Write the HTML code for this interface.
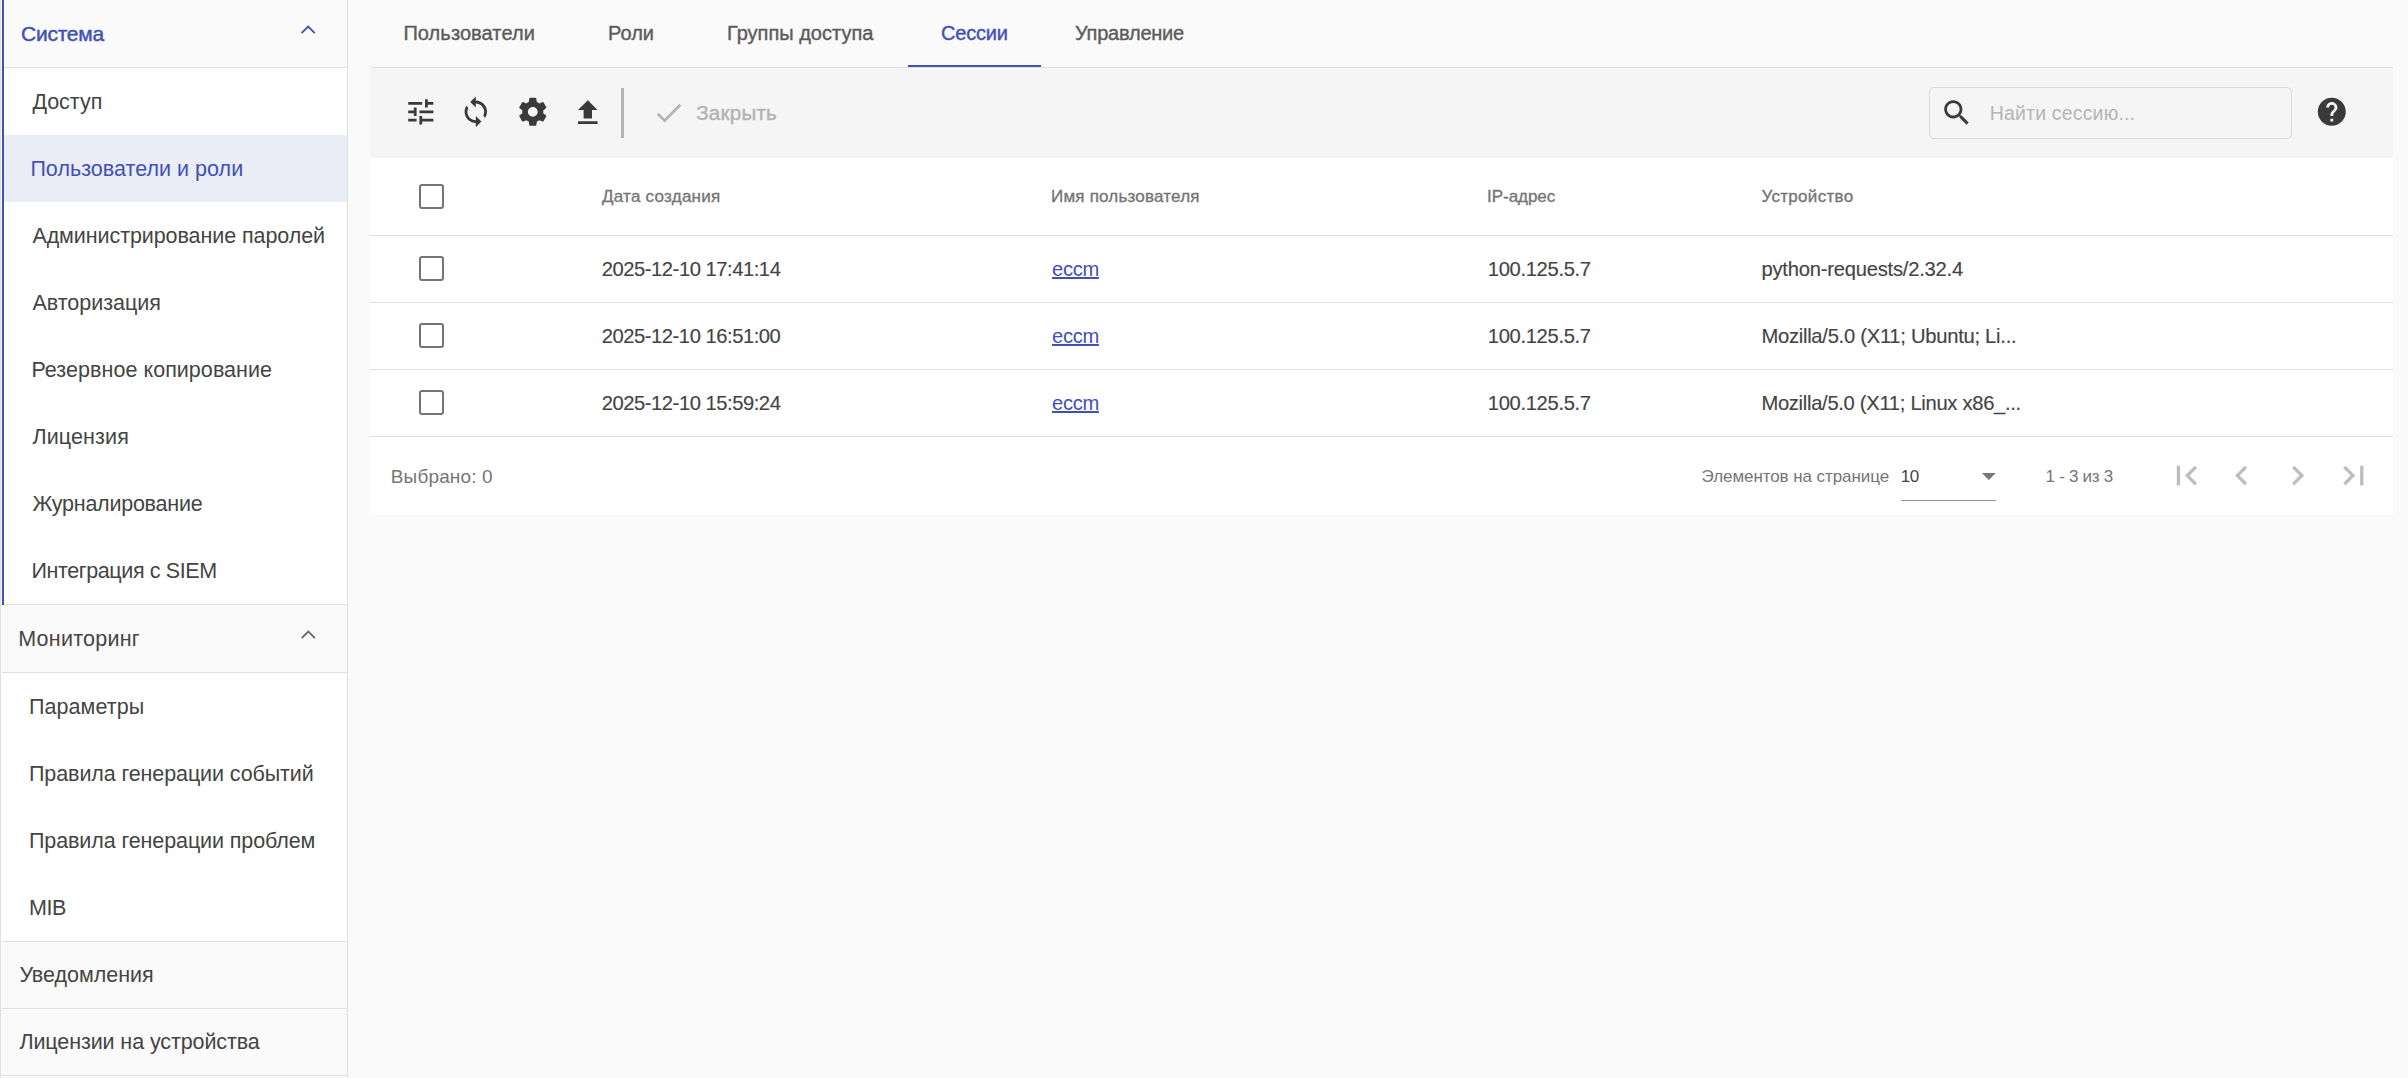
<!DOCTYPE html><html><head><meta charset="utf-8"><style>
html,body{margin:0;padding:0}
body{width:2408px;height:1078px;overflow:hidden;background:#fafafa;position:relative;font-family:"Liberation Sans",sans-serif}
.b{position:absolute}
.t{position:absolute;white-space:nowrap;line-height:0;font-family:"Liberation Sans",sans-serif}
.cb{position:absolute;width:21px;height:21px;border:2px solid #747474;border-radius:3px;box-sizing:content-box}
</style></head><body>

<div class="b" style="left:0px;top:0px;width:1px;height:1078px;background:#e0e0e0;"></div>
<div class="b" style="left:1px;top:0px;width:1px;height:1078px;background:#fcfcfc;"></div>
<div class="b" style="left:347px;top:0px;width:1px;height:1078px;background:#e0e0e0;"></div>
<div class="b" style="left:2px;top:0px;width:345px;height:67px;background:#fafafa;"></div>
<div class="b" style="left:2px;top:67px;width:345px;height:1px;background:#e0e0e0;"></div>
<div class="b" style="left:2px;top:68px;width:345px;height:536px;background:#ffffff;"></div>
<div class="b" style="left:2px;top:135px;width:345px;height:67px;background:#eaecf6;"></div>
<div class="b" style="left:2px;top:604px;width:345px;height:1px;background:#e0e0e0;"></div>
<div class="b" style="left:2px;top:0px;width:2px;height:605px;background:#3f51b5;"></div>
<div class="b" style="left:4px;top:0px;width:1px;height:67px;background:#ffffff;"></div>
<div class="b" style="left:2px;top:605px;width:345px;height:67px;background:#fafafa;"></div>
<div class="b" style="left:2px;top:672px;width:345px;height:1px;background:#e0e0e0;"></div>
<div class="b" style="left:2px;top:673px;width:345px;height:268px;background:#ffffff;"></div>
<div class="b" style="left:2px;top:941px;width:345px;height:1px;background:#e0e0e0;"></div>
<div class="b" style="left:2px;top:942px;width:345px;height:66px;background:#fafafa;"></div>
<div class="b" style="left:2px;top:1008px;width:345px;height:1px;background:#e0e0e0;"></div>
<div class="b" style="left:2px;top:1009px;width:345px;height:66px;background:#fafafa;"></div>
<div class="b" style="left:2px;top:1075px;width:345px;height:1px;background:#e0e0e0;"></div>
<svg class="b" style="left:296px;top:20px;width:24px;height:20px" viewBox="0 0 24 20"><polyline points="5.55,13.2 12.15,6.6 18.75,13.2" fill="none" stroke="#3f51b5" stroke-width="1.8"/></svg>
<svg class="b" style="left:296px;top:626px;width:24px;height:20px" viewBox="0 0 24 20"><polyline points="5.7,12.2 12.3,5.6 18.9,12.2" fill="none" stroke="#666" stroke-width="1.8"/></svg>
<div class="b" style="left:370px;top:67px;width:2023px;height:1px;background:#e0e0e0;"></div>
<div class="b" style="left:908px;top:65px;width:133px;height:2px;background:#3f51b5;"></div>
<div class="b" style="left:370px;top:68px;width:2023px;height:90px;background:#f5f5f5;"></div>
<div class="b" style="left:621px;top:88px;width:3px;height:50px;background:#b3b3b3;"></div>
<div class="b" style="left:1929px;top:87px;width:363px;height:52px;background:transparent;border:1px solid #d9d9d9;border-radius:5px;box-sizing:border-box;"></div>
<div class="b" style="left:370px;top:158px;width:2023px;height:357px;background:#ffffff;"></div>
<div class="b" style="left:370px;top:235px;width:2023px;height:1px;background:#e0e0e0;"></div>
<div class="b" style="left:370px;top:302px;width:2023px;height:1px;background:#e0e0e0;"></div>
<div class="b" style="left:370px;top:369px;width:2023px;height:1px;background:#e0e0e0;"></div>
<div class="b" style="left:370px;top:436px;width:2023px;height:1px;background:#e0e0e0;"></div>
<div class="cb" style="left:419px;top:184px"></div>
<div class="cb" style="left:419px;top:256px"></div>
<div class="cb" style="left:419px;top:323px"></div>
<div class="cb" style="left:419px;top:390px"></div>
<div class="b" style="left:1901px;top:500px;width:95px;height:1px;background:#959595;"></div>
<svg style="position:absolute;left:404.0px;top:95.2px;width:33.6px;height:33.6px" viewBox="0 0 24 24"><path fill="#3a3a3a" d="M3 17v2h6v-2H3zM3 5v2h10V5H3zm10 16v-2h8v-2h-8v-2h-2v6h2zM7 9v2H3v2h4v2h2V9H7zm14 4v-2H11v2h10zm-6-4h2V7h4V5h-4V3h-2v6z"/></svg>
<svg style="position:absolute;left:459.3px;top:95.3px;width:33.6px;height:33.6px" viewBox="0 0 24 24"><path fill="#3a3a3a" d="M12 4V1L8 5l4 4V6c3.31 0 6 2.69 6 6 0 1.01-.25 1.97-.7 2.8l1.46 1.46C19.54 15.03 20 13.57 20 12c0-4.42-3.58-8-8-8zm0 14c-3.31 0-6-2.69-6-6 0-1.01.25-1.97.7-2.8L5.24 7.74C4.46 8.97 4 10.43 4 12c0 4.42 3.58 8 8 8v3l4-4-4-4v3z"/></svg>
<svg style="position:absolute;left:516.0px;top:95.2px;width:33.6px;height:33.6px" viewBox="0 0 24 24"><path fill="#3a3a3a" d="M19.43 12.98c.04-.32.07-.64.07-.98s-.03-.66-.07-.98l2.11-1.65c.19-.15.24-.42.12-.64l-2-3.46c-.12-.22-.39-.3-.61-.22l-2.49 1c-.52-.4-1.08-.73-1.69-.98l-.38-2.65C14.46 2.18 14.25 2 14 2h-4c-.25 0-.46.18-.49.42l-.38 2.65c-.61.25-1.17.59-1.69.98l-2.49-1c-.23-.09-.49 0-.61.22l-2 3.46c-.13.22-.07.49.12.64l2.11 1.65c-.04.32-.07.65-.07.98s.03.66.07.98l-2.11 1.65c-.19.15-.24.42-.12.64l2 3.46c.12.22.39.3.61.22l2.49-1c.52.4 1.08.73 1.69.98l.38 2.65c.03.24.24.42.49.42h4c.25 0 .46-.18.49-.42l.38-2.65c.61-.25 1.17-.59 1.69-.98l2.49 1c.23.09.49 0 .61-.22l2-3.46c.12-.22.07-.49-.12-.64l-2.11-1.65zM12 15.5c-1.93 0-3.5-1.57-3.5-3.5s1.57-3.5 3.5-3.5 3.5 1.57 3.5 3.5-1.57 3.5-3.5 3.5z"/></svg>
<svg style="position:absolute;left:571.0px;top:96.0px;width:33.6px;height:33.6px" viewBox="0 0 24 24"><path fill="#3a3a3a" d="M9 16h6v-6h4l-7-7-7 7h4zm-4 2h14v2H5z"/></svg>
<svg style="position:absolute;left:652.2px;top:95.5px;width:33.6px;height:33.6px" viewBox="0 0 24 24"><path fill="#b3b3b3" d="M9 16.17L4.83 12l-1.42 1.41L9 19 21 7l-1.41-1.41z"/></svg>
<svg style="position:absolute;left:1939.9px;top:95.6px;width:33.6px;height:33.6px" viewBox="0 0 24 24"><path fill="#3a3a3a" d="M15.5 14h-.79l-.28-.27C15.41 12.59 16 11.11 16 9.5 16 5.91 13.09 3 9.5 3S3 5.91 3 9.5 5.91 16 9.5 16c1.61 0 3.09-.59 4.23-1.57l.27.28v.79l5 4.99L20.49 19l-4.99-5zm-6 0C7.01 14 5 11.99 5 9.5S7.01 5 9.5 5 14 7.01 14 9.5 11.99 14 9.5 14z"/></svg>
<svg style="position:absolute;left:2314.8px;top:95.2px;width:33.6px;height:33.6px" viewBox="0 0 24 24"><path fill="#3a3a3a" d="M12 2C6.48 2 2 6.48 2 12s4.48 10 10 10 10-4.48 10-10S17.52 2 12 2zm1 17h-2v-2h2v2zm2.07-7.75l-.9.92C13.45 12.9 13 13.5 13 15h-2v-.5c0-1.1.45-2.1 1.17-2.83l1.24-1.26c.37-.36.59-.86.59-1.41 0-1.1-.9-2-2-2s-2 .9-2 2H8c0-2.21 1.79-4 4-4s4 1.79 4 4c0 .88-.36 1.68-.93 2.25z"/></svg>
<svg style="position:absolute;left:2166.6px;top:456.1px;width:39.2px;height:39.2px" viewBox="0 0 24 24"><path fill="#bdbdbd" d="M18.41 16.59L13.82 12l4.59-4.59L17 6l-6 6 6 6zM6 6h2v12H6z"/></svg>
<svg style="position:absolute;left:2222.4px;top:456.1px;width:39.2px;height:39.2px" viewBox="0 0 24 24"><path fill="#bdbdbd" d="M15.41 7.41L14 6l-6 6 6 6 1.41-1.41L10.83 12z"/></svg>
<svg style="position:absolute;left:2278.4px;top:456.1px;width:39.2px;height:39.2px" viewBox="0 0 24 24"><path fill="#bdbdbd" d="M10 6L8.59 7.41 13.17 12l-4.58 4.59L10 18l6-6z"/></svg>
<svg style="position:absolute;left:2333.6px;top:456.1px;width:39.2px;height:39.2px" viewBox="0 0 24 24"><path fill="#bdbdbd" d="M5.59 7.41L10.18 12l-4.59 4.59L7 18l6-6-6-6zM16 6h2v12h-2z"/></svg>
<svg style="position:absolute;left:1972.2px;top:458.9px;width:33.6px;height:33.6px" viewBox="0 0 24 24"><path fill="#777777" d="M7 10l5 5 5-5z"/></svg>
<div class="t" id="s_sys" style="left:21.00px;top:34.00px;font-size:21px;color:#3f51b5;letter-spacing:-0.250px;-webkit-text-stroke:0.45px #3f51b5;">Система</div>
<div class="t" id="s_i0" style="left:32.40px;top:102.00px;font-size:21.5px;color:#444444;letter-spacing:-0.020px;">Доступ</div>
<div class="t" id="s_i1" style="left:30.40px;top:169.00px;font-size:21.5px;color:#3f51b5;letter-spacing:0.028px;">Пользователи и роли</div>
<div class="t" id="s_i2" style="left:32.40px;top:236.00px;font-size:21.5px;color:#444444;letter-spacing:-0.077px;">Администрирование паролей</div>
<div class="t" id="s_i3" style="left:32.40px;top:303.00px;font-size:21.5px;color:#444444;letter-spacing:-0.010px;">Авторизация</div>
<div class="t" id="s_i4" style="left:31.40px;top:370.00px;font-size:21.5px;color:#444444;letter-spacing:0.045px;">Резервное копирование</div>
<div class="t" id="s_i5" style="left:32.40px;top:437.00px;font-size:21.5px;color:#444444;letter-spacing:0.128px;">Лицензия</div>
<div class="t" id="s_i6" style="left:32.40px;top:504.00px;font-size:21.5px;color:#444444;letter-spacing:-0.238px;">Журналирование</div>
<div class="t" id="s_i7" style="left:31.40px;top:571.00px;font-size:21.5px;color:#444444;letter-spacing:-0.382px;">Интеграция с SIEM</div>
<div class="t" id="s_mon" style="left:18.20px;top:639.00px;font-size:21.5px;color:#444444;letter-spacing:0.246px;">Мониторинг</div>
<div class="t" id="s_m0" style="left:29.00px;top:707.00px;font-size:21.5px;color:#444444;letter-spacing:0.066px;">Параметры</div>
<div class="t" id="s_m1" style="left:29.00px;top:774.00px;font-size:21.5px;color:#444444;letter-spacing:-0.103px;">Правила генерации событий</div>
<div class="t" id="s_m2" style="left:29.00px;top:841.00px;font-size:21.5px;color:#444444;letter-spacing:-0.104px;">Правила генерации проблем</div>
<div class="t" id="s_m3" style="left:29.00px;top:908.00px;font-size:21.5px;color:#444444;letter-spacing:-0.400px;">MIB</div>
<div class="t" id="s_not" style="left:19.40px;top:975.00px;font-size:21.5px;color:#444444;letter-spacing:-0.010px;">Уведомления</div>
<div class="t" id="s_lic" style="left:19.40px;top:1042.00px;font-size:21.5px;color:#444444;letter-spacing:-0.099px;">Лицензии на устройства</div>
<div class="t" id="t0" style="left:403.40px;top:33.01px;font-size:20px;color:#5c5c5c;letter-spacing:0.084px;-webkit-text-stroke:0.4px #5c5c5c;">Пользователи</div>
<div class="t" id="t1" style="left:608.00px;top:33.01px;font-size:20px;color:#5c5c5c;letter-spacing:0.000px;-webkit-text-stroke:0.4px #5c5c5c;">Роли</div>
<div class="t" id="t2" style="left:727.00px;top:33.01px;font-size:20px;color:#5c5c5c;letter-spacing:0.000px;-webkit-text-stroke:0.4px #5c5c5c;">Группы доступа</div>
<div class="t" id="t3" style="left:941.00px;top:33.01px;font-size:20px;color:#3f51b5;letter-spacing:-0.200px;-webkit-text-stroke:0.4px #3f51b5;">Сессии</div>
<div class="t" id="t4" style="left:1075.00px;top:33.01px;font-size:20px;color:#5c5c5c;letter-spacing:-0.222px;-webkit-text-stroke:0.4px #5c5c5c;">Управление</div>
<div class="t" id="close" style="left:696.20px;top:113.01px;font-size:20.5px;color:#b3b3b3;letter-spacing:0.268px;-webkit-text-stroke:0.4px #b3b3b3;">Закрыть</div>
<div class="t" id="ph" style="left:1989.80px;top:113.01px;font-size:19.5px;color:#b5b5b5;letter-spacing:0.164px;">Найти сессию...</div>
<div class="t" id="h0" style="left:602.00px;top:197.00px;font-size:17px;color:#757575;letter-spacing:0.250px;-webkit-text-stroke:0.35px #757575;">Дата создания</div>
<div class="t" id="h1" style="left:1051.00px;top:197.00px;font-size:17px;color:#757575;letter-spacing:0.200px;-webkit-text-stroke:0.35px #757575;">Имя пользователя</div>
<div class="t" id="h2" style="left:1487.00px;top:197.00px;font-size:17px;color:#757575;letter-spacing:-0.030px;-webkit-text-stroke:0.35px #757575;">IP-адрес</div>
<div class="t" id="h3" style="left:1761.40px;top:197.00px;font-size:17px;color:#757575;letter-spacing:0.324px;-webkit-text-stroke:0.35px #757575;">Устройство</div>
<div class="t" id="r0d" style="left:601.80px;top:269.00px;font-size:20.2px;color:#444444;letter-spacing:-0.466px;-webkit-text-stroke:0.15px #444444;">2025-12-10 17:41:14</div>
<div class="t" id="r0u" style="left:1052.00px;top:269.00px;font-size:20.2px;color:#3f51b5;letter-spacing:-0.333px;text-decoration:underline;text-underline-offset:1px;">eccm</div>
<div class="t" id="r0ip" style="left:1487.80px;top:269.00px;font-size:20.2px;color:#444444;letter-spacing:-0.340px;-webkit-text-stroke:0.15px #444444;">100.125.5.7</div>
<div class="t" id="r0dev" style="left:1761.40px;top:269.00px;font-size:20.2px;color:#444444;letter-spacing:-0.224px;-webkit-text-stroke:0.15px #444444;">python-requests/2.32.4</div>
<div class="t" id="r1d" style="left:601.80px;top:336.00px;font-size:20.2px;color:#444444;letter-spacing:-0.467px;-webkit-text-stroke:0.15px #444444;">2025-12-10 16:51:00</div>
<div class="t" id="r1u" style="left:1052.00px;top:336.00px;font-size:20.2px;color:#3f51b5;letter-spacing:-0.333px;text-decoration:underline;text-underline-offset:1px;">eccm</div>
<div class="t" id="r1ip" style="left:1487.80px;top:336.00px;font-size:20.2px;color:#444444;letter-spacing:-0.340px;-webkit-text-stroke:0.15px #444444;">100.125.5.7</div>
<div class="t" id="r1dev" style="left:1761.40px;top:336.00px;font-size:20.2px;color:#444444;letter-spacing:-0.271px;-webkit-text-stroke:0.15px #444444;">Mozilla/5.0 (X11; Ubuntu; Li...</div>
<div class="t" id="r2d" style="left:601.80px;top:403.00px;font-size:20.2px;color:#444444;letter-spacing:-0.466px;-webkit-text-stroke:0.15px #444444;">2025-12-10 15:59:24</div>
<div class="t" id="r2u" style="left:1052.00px;top:403.00px;font-size:20.2px;color:#3f51b5;letter-spacing:-0.333px;text-decoration:underline;text-underline-offset:1px;">eccm</div>
<div class="t" id="r2ip" style="left:1487.80px;top:403.00px;font-size:20.2px;color:#444444;letter-spacing:-0.340px;-webkit-text-stroke:0.15px #444444;">100.125.5.7</div>
<div class="t" id="r2dev" style="left:1761.40px;top:403.00px;font-size:20.2px;color:#444444;letter-spacing:-0.304px;-webkit-text-stroke:0.15px #444444;">Mozilla/5.0 (X11; Linux x86_...</div>
<div class="t" id="sel" style="left:390.80px;top:477.01px;font-size:19px;color:#757575;letter-spacing:0.145px;">Выбрано: 0</div>
<div class="t" id="ipp" style="left:1701.60px;top:477.00px;font-size:17px;color:#757575;letter-spacing:-0.075px;">Элементов на странице</div>
<div class="t" id="ten" style="left:1900.80px;top:477.00px;font-size:17px;color:#444444;letter-spacing:-0.600px;">10</div>
<div class="t" id="rng" style="left:2045.60px;top:477.00px;font-size:17px;color:#757575;letter-spacing:-0.290px;">1 - 3 из 3</div>
</body></html>
